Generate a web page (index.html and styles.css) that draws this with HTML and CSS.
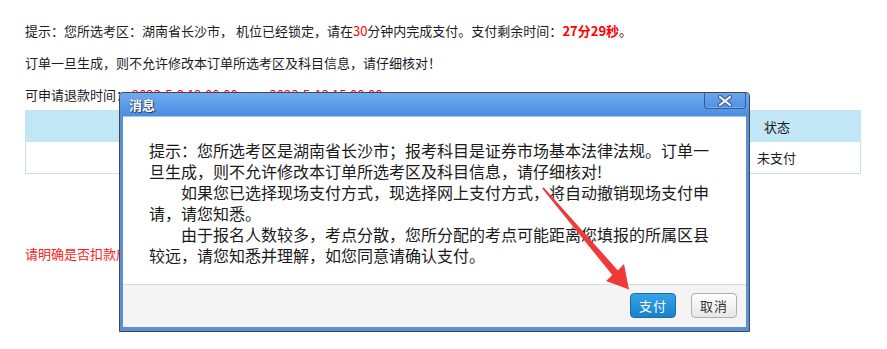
FILE: index.html
```html
<!DOCTYPE html>
<html lang="zh-CN">
<head>
<meta charset="utf-8">
<title>支付</title>
<link rel="stylesheet" href="styles.css">
</head>
<body>
<div class="page">
  <p class="line">提示：您所选考区：湖南省长沙市， 机位已经锁定，请在<span class="red">30</span>分钟内完成支付。支付剩余时间：<b class="red">27分29秒</b>。</p>
  <p class="line">订单一旦生成，则不允许修改本订单所选考区及科目信息，请仔细核对！</p>
  <p class="line last">可申请退款时间： <span class="red">2023-5-9 12:00:00 —— 2023-5-12 15:00:00</span></p>
  <table class="orders">
    <thead>
      <tr><th></th><th class="st">状态</th></tr>
    </thead>
    <tbody>
      <tr><td></td><td class="st">未支付</td></tr>
    </tbody>
  </table>
  <p class="warn">请明确是否扣款成</p>
</div>

<div class="dialog">
  <div class="dlg-title">
    <span class="dlg-name">消息</span>
    <span class="dlg-close">
      <svg width="16" height="12" viewBox="0 0 16 12">
        <path d="M3 2 L13 10 M13 2 L3 10" stroke="#3b5f93" stroke-width="4.2" stroke-linecap="round" fill="none"/>
        <path d="M3 2 L13 10 M13 2 L3 10" stroke="#f4f7fb" stroke-width="2.2" stroke-linecap="round" fill="none"/>
      </svg>
    </span>
  </div>
  <div class="dlg-body">
    <div class="dlg-text">
      <p>提示：您所选考区是湖南省长沙市；报考科目是证券市场基本法律法规。订单一旦生成，则不允许修改本订单所选考区及科目信息，请仔细核对!</p>
      <p class="ind">如果您已选择现场支付方式，现选择网上支付方式，将自动撤销现场支付申请，请您知悉。</p>
      <p class="ind">由于报名人数较多，考点分散，您所分配的考点可能距离您填报的所属区县较远，请您知悉并理解，如您同意请确认支付。</p>
    </div>
  </div>
  <div class="dlg-foot">
    <button class="btn btn-pay">支付</button>
    <button class="btn btn-cancel">取消</button>
  </div>
</div>

<svg class="arrow" width="887" height="349" viewBox="0 0 887 349">
  <polygon points="542.2,188.6 543.8,187.4 617.9,270.4 624,264 629,289.5 606,281 612.3,275" fill="#f03a3a"/>
</svg>
</body>
</html>
```

FILE: styles.css
```css
html, body {
  margin: 0;
  padding: 0;
  background: #fff;
}
body {
  font-family: "Noto Sans CJK SC", "Microsoft YaHei", "Liberation Sans", sans-serif;
  font-size: 13px;
  color: #1c1c1c;
  width: 887px;
  height: 349px;
  overflow: hidden;
  position: relative;
}
.page {
  padding: 15px 26px 0 25px;
}
.line {
  margin: 0;
  height: 32px;
  line-height: 32px;
  white-space: nowrap;
}
.line.last {
  height: 31px;
  line-height: 31px;
}
.red {
  color: #ff0000;
}
b.red {
  font-weight: bold;
}
.orders {
  width: 836px;
  border-collapse: collapse;
  border: 1px solid #c6e2ef;
  table-layout: fixed;
}
.orders th {
  background: #c1e6f6;
  height: 31px;
  padding: 0;
  font-weight: normal;
  text-align: left;
  color: #1c1c1c;
}
.orders td {
  height: 31px;
  padding: 0;
  background: #fff;
  color: #1c1c1c;
}
.orders th.st {
  width: 96px;
  padding-left: 17px;
}
.orders td.st {
  padding-left: 10px;
}
.warn {
  margin: 0;
  margin-top: 68px;
  line-height: 24px;
  color: #ff1a1a;
  white-space: nowrap;
}

.dialog {
  position: absolute;
  left: 119px;
  top: 92px;
  width: 623px;
  height: 235px;
  border: 1px solid #474747;
  border-radius: 4px 4px 0 0;
  background: #5a90d8;
  padding: 0 3px 3px 3px;
  box-sizing: content-box;
  display: flex;
  flex-direction: column;
}
.dlg-title {
  height: 23px;
  display: flex;
  align-items: flex-start;
  margin: 0 -3px;
  padding: 0 3px 0 9px;
  background: linear-gradient(#6eabf1, #4c8de0);
  border-radius: 3px 3px 0 0;
}
.dlg-name {
  font-size: 13px;
  line-height: 23px;
  color: #fff;
  font-weight: bold;
  text-shadow: 0 0 1px #1f3c6a, 1px 1px 1px #1f3c6a;
}
.dlg-close {
  margin-left: auto;
  width: 40px;
  height: 15px;
  border: 1px solid #2f5d9e;
  border-top: none;
  border-radius: 0 0 4px 4px;
  background: linear-gradient(#6aa6ee, #5291e2);
  display: flex;
  align-items: center;
  justify-content: center;
  box-shadow: inset 0 -1px 0 rgba(255,255,255,0.25);
}
.dlg-close svg {
  display: block;
}
.dlg-body {
  height: 167px;
  background: #fff;
  border-top: 1px solid #a9c4e8;
}
.dlg-text {
  width: 565px;
  padding: 23px 0 0 26px;
  font-size: 16px;
  line-height: 21px;
  color: #1a1a1a;
}
.dlg-text p {
  margin: 0;
}
.dlg-text p.ind {
  text-indent: 2em;
}
.dlg-foot {
  height: 43px;
  background: #f4f4f4;
  border-top: 1px solid #d6dbe3;
  display: flex;
  justify-content: flex-end;
  align-items: flex-start;
  gap: 15px;
  padding: 8px 9px 0 0;
  box-sizing: border-box;
}
.btn {
  width: 46px;
  height: 25px;
  font-family: "Noto Sans CJK SC", "Microsoft YaHei", sans-serif;
  font-size: 13px;
  line-height: 23px;
  padding: 0;
  border-radius: 4px;
  letter-spacing: 1px;
}
.btn-pay {
  color: #fff;
  border: 1px solid #1b6db0;
  background: linear-gradient(#33a3e6, #1a80cb);
}
.btn-cancel {
  color: #333;
  border: 1px solid #aeaeae;
  background: linear-gradient(#ffffff, #e6e6e6);
}
.arrow {
  position: absolute;
  left: 0;
  top: 0;
  pointer-events: none;
}
```
